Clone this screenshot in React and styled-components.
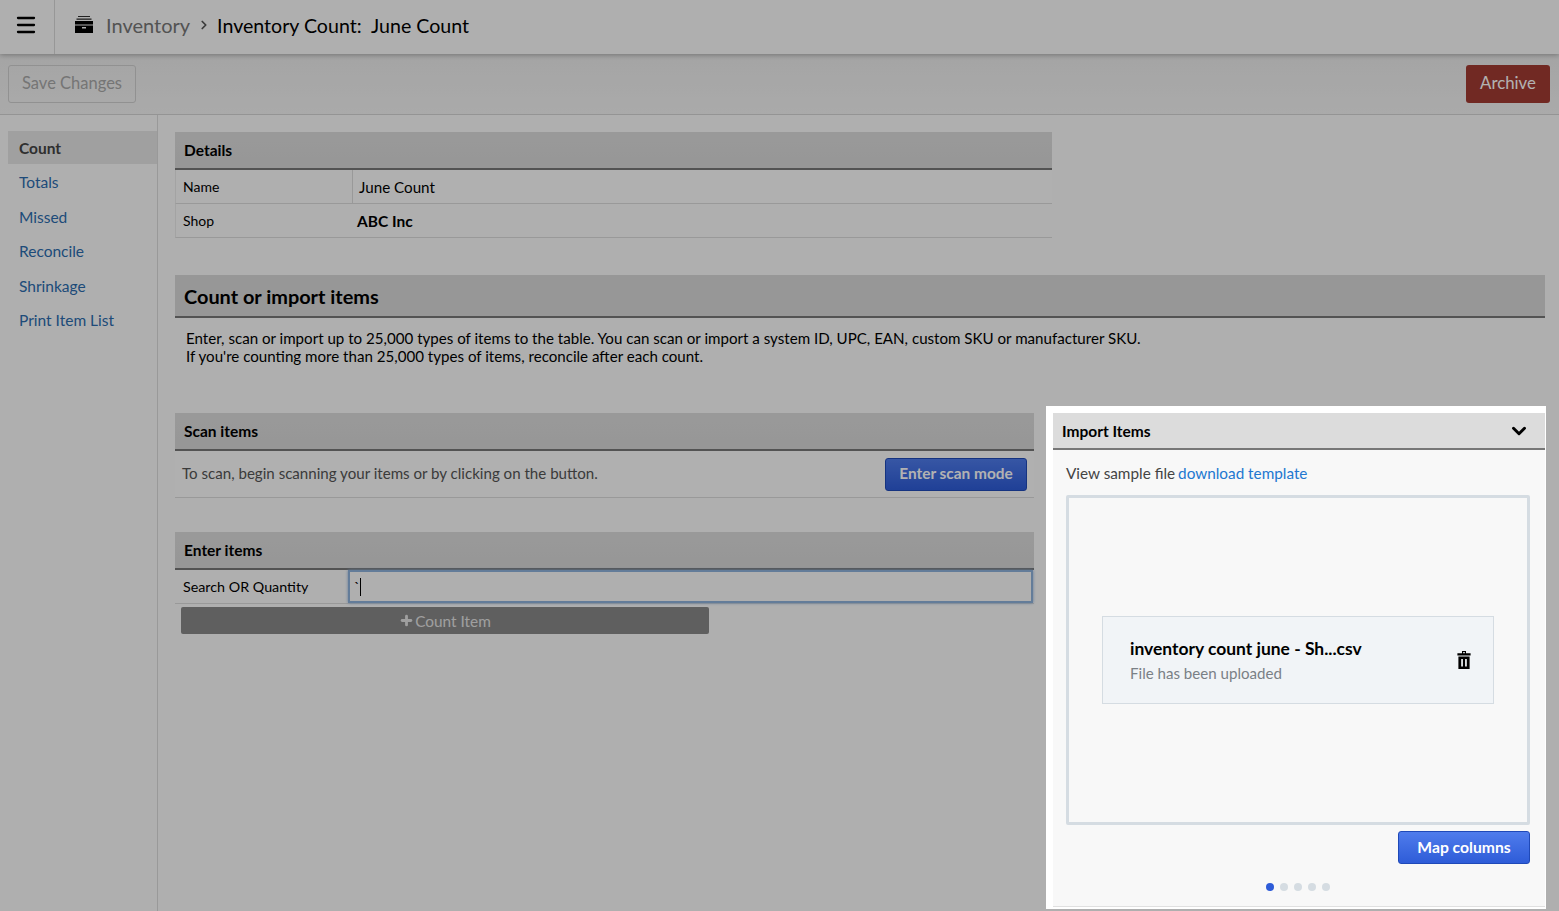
import styled, { createGlobalStyle } from "styled-components";
import { Menu, ChevronRight, ChevronDown, Plus } from "lucide-react";

const GlobalStyle = createGlobalStyle`
  html, body {
    margin: 0;
    height: 100%;
    overflow: hidden;
    background: #fbfbfb;
    font-family: Lato, "Liberation Sans", sans-serif;
    color: #000;
  }
  * { box-sizing: border-box; }
`;

const navItems = ["Count", "Totals", "Missed", "Reconcile", "Shrinkage", "Print Item List"];

const ArchiveBoxIcon = () => (
  <svg width="18" height="18" viewBox="0 0 18 18" fill="#000">
    <rect x="3" y="0" width="12" height="1" fill="#333" />
    <rect x="1.5" y="2.5" width="15" height="1.3" fill="#333" />
    <rect x="0" y="5" width="18" height="3.5" />
    <path d="M0 9.5h18V17H0z M7 11v1.6h4V11z" fillRule="evenodd" />
  </svg>
);

const TrashIcon = () => (
  <svg width="14" height="18" viewBox="0 0 14 18" fill="#000">
    <path d="M5 0h4v2.2h4.6v2.4H.4V2.2H5z M6.2 1v1.2h1.6V1z" fillRule="evenodd" />
    <path d="M1.4 5.6h11.2V18H1.4z M4.2 8v7.4h1.7V8z M8.1 8v7.4h1.7V8z" fillRule="evenodd" />
  </svg>
);

const App = () => {
  return (
    <>
      <GlobalStyle />
      <Page>
        <Header>
          <MenuCell>
            <Menu size={24} strokeWidth={2.3} color="#000" />
          </MenuCell>
          <Crumbs>
            <ArchiveBoxIcon />
            <CrumbLink>Inventory</CrumbLink>
            <ChevronRight size={14} strokeWidth={3} color="#555" />
            <CrumbTitle>Inventory Count:&nbsp; June Count</CrumbTitle>
          </Crumbs>
        </Header>
        <Toolbar>
          <SaveButton>Save Changes</SaveButton>
          <ArchiveButton>Archive</ArchiveButton>
        </Toolbar>
        <Body>
          <Sidebar>
            {navItems.map((item, i) => (
              <NavItem key={item} $active={i === 0}>
                {item}
              </NavItem>
            ))}
          </Sidebar>
          <Main>
            <DetailsCard>
              <SectionHeader>Details</SectionHeader>
              <FieldRow>
                <FieldLabel>Name</FieldLabel>
                <FieldValue $boxed>June Count</FieldValue>
              </FieldRow>
              <FieldRow>
                <FieldLabel>Shop</FieldLabel>
                <FieldValue $bold>ABC Inc</FieldValue>
              </FieldRow>
            </DetailsCard>

            <BigHeader>Count or import items</BigHeader>
            <Intro>
              Enter, scan or import up to 25,000 types of items to the table. You can scan or import a system ID, UPC, EAN, custom SKU or manufacturer SKU.
              <br />
              If you're counting more than 25,000 types of items, reconcile after each count.
            </Intro>

            <Columns>
              <LeftColumn>
                <section>
                  <SectionHeader>Scan items</SectionHeader>
                  <ScanRow>
                    <ScanText>To scan, begin scanning your items or by clicking on the button.</ScanText>
                    <ScanButton>Enter scan mode</ScanButton>
                  </ScanRow>
                </section>
                <section>
                  <SectionHeader>Enter items</SectionHeader>
                  <EntryRow>
                    <EntryLabel>Search OR Quantity</EntryLabel>
                    <EntryInput>
                      <span>`</span>
                      <Caret />
                    </EntryInput>
                  </EntryRow>
                  <CountButton>
                    <Plus size={15} strokeWidth={4.5} />
                    Count Item
                  </CountButton>
                </section>
              </LeftColumn>

              <ImportPanel>
                <ImportHeader>
                  Import Items
                  <ChevronDown size={22} strokeWidth={3.2} />
                </ImportHeader>
                <ImportBody>
                  <SampleLine>
                    View sample file <SampleLink>download template</SampleLink>
                  </SampleLine>
                  <DropZone>
                    <FileCard>
                      <FileText>
                        <FileName>inventory count june - Sh...csv</FileName>
                        <FileStatus>File has been uploaded</FileStatus>
                      </FileText>
                      <TrashIcon />
                    </FileCard>
                  </DropZone>
                  <MapRow>
                    <MapButton>Map columns</MapButton>
                  </MapRow>
                  <Dots>
                    {[0, 1, 2, 3, 4].map((d) => (
                      <Dot key={d} $active={d === 0} />
                    ))}
                  </Dots>
                </ImportBody>
              </ImportPanel>
            </Columns>
          </Main>
        </Body>
        <Overlay />
      </Page>
    </>
  );
};

export default App;

const Page = styled.div`
  position: relative;
  height: 911px;
  overflow: hidden;
  display: flex;
  flex-direction: column;
`;

const Overlay = styled.div`
  position: absolute;
  inset: 0;
  background: rgba(0, 0, 0, 0.3);
  z-index: 5;
`;

const Header = styled.header`
  position: relative;
  z-index: 1;
  height: 54px;
  flex: none;
  display: flex;
  background: #fbfbfb;
  box-shadow: 0 1px 5px rgba(0, 0, 0, 0.3);
`;

const MenuCell = styled.div`
  width: 55px;
  display: flex;
  align-items: center;
  padding: 0 0 5px 14px;
  border-right: 1px solid #d8d8d8;
`;

const Crumbs = styled.div`
  display: flex;
  align-items: center;
  padding: 0 0 4px 20px;
`;

const CrumbLink = styled.span`
  margin-left: 13px;
  margin-right: 7px;
  font-size: 20px;
  color: #777;
`;

const CrumbTitle = styled.span`
  margin-left: 6px;
  font-size: 19.6px;
  color: #000;
`;

const Toolbar = styled.div`
  height: 61px;
  flex: none;
  display: flex;
  align-items: center;
  justify-content: space-between;
  padding: 0 9px 1px 8px;
  background: linear-gradient(#ececec, #f4f4f4);
  border-bottom: 1px solid #d4d4d4;
`;

const SaveButton = styled.button`
  width: 128px;
  height: 38px;
  padding-bottom: 3px;
  font: 16.5px Lato, sans-serif;
  color: #a8a8a8;
  background: transparent;
  border: 1px solid #d0d0d0;
  border-radius: 3px;
`;

const ArchiveButton = styled.button`
  width: 84px;
  height: 38px;
  padding: 0 0 3px;
  font: 16.8px Lato, sans-serif;
  color: #fff;
  background: #a33b33;
  border: none;
  border-radius: 3px;
`;

const Body = styled.div`
  flex: 1;
  display: flex;
  min-height: 0;
`;

const Sidebar = styled.nav`
  width: 158px;
  flex: none;
  padding: 16px 0 0 8px;
  border-right: 1px solid #dcdcdc;
`;

const NavItem = styled.div`
  height: 33px;
  margin-bottom: 1.5px;
  padding-left: 11px;
  display: flex;
  align-items: center;
  font-size: 15.5px;
  font-weight: ${(p) => (p.$active ? 700 : 400)};
  color: ${(p) => (p.$active ? "#444" : "#2b6cae")};
  background: ${(p) => (p.$active ? "#e6e6e6" : "transparent")};
`;

const Main = styled.main`
  flex: 1;
  min-width: 0;
  padding: 17px 14px 0 17px;
`;

const DetailsCard = styled.section`
  width: 877px;
  margin-bottom: 37px;
`;

const SectionHeader = styled.h3`
  margin: 0;
  height: 38px;
  padding: 0 9px;
  display: flex;
  align-items: center;
  font-size: 15.5px;
  font-weight: 700;
  color: #000;
  background: linear-gradient(#dcdcdc, #d8d8d8);
  border-bottom: 2px solid #777;
`;

const FieldRow = styled.div`
  display: flex;
  height: 34px;
  border-bottom: 1px solid #dcdcdc;
  border-left: 1px solid #eaeaea;
`;

const FieldLabel = styled.div`
  width: 176px;
  padding-left: 7px;
  display: flex;
  align-items: center;
  font-size: 14px;
`;

const FieldValue = styled.div`
  flex: 1;
  display: flex;
  align-items: center;
  padding-left: ${(p) => (p.$boxed ? "6px" : "4px")};
  font-size: ${(p) => (p.$bold ? "15.5px" : "15.2px")};
  font-weight: ${(p) => (p.$bold ? 700 : 400)};
  border-left: ${(p) => (p.$boxed ? "1px solid #dcdcdc" : "1px solid transparent")};
  background: ${(p) => (p.$boxed ? "#fdfdfd" : "transparent")};
`;

const BigHeader = styled.h2`
  margin: 0;
  height: 43px;
  padding: 0 9px;
  display: flex;
  align-items: center;
  font-size: 19.9px;
  font-weight: 700;
  background: #d8d8d8;
  border-bottom: 2px solid #777;
`;

const Intro = styled.p`
  margin: 11px 0 0;
  padding-left: 11px;
  font-size: 15.11px;
  line-height: 18px;
  height: 84px;
  color: #000;
`;

const Columns = styled.div`
  display: flex;
  align-items: flex-start;
  gap: 12px;
`;

const LeftColumn = styled.div`
  width: 859px;
  flex: none;
  display: flex;
  flex-direction: column;
  gap: 34px;
`;

const ScanRow = styled.div`
  height: 47px;
  padding: 0 7px;
  display: flex;
  align-items: center;
  justify-content: space-between;
  color: #555;
  background: #fcfcfc;
  border-bottom: 1px solid #dcdcdc;
`;

const ScanText = styled.span`
  padding-bottom: 2px;
  font-size: 15.1px;
`;

const ScanButton = styled.button`
  width: 142px;
  height: 33px;
  padding: 0 0 2px;
  font: 700 15.4px Lato, sans-serif;
  color: #fff;
  background: linear-gradient(#4f7cec, #2e5cd8);
  border: 1px solid #1f49b8;
  border-radius: 3px;
`;

const EntryRow = styled.div`
  display: flex;
  height: 34px;
  border-bottom: 1px solid #dcdcdc;
`;

const EntryLabel = styled.div`
  width: 173px;
  padding-left: 8px;
  display: flex;
  align-items: center;
  font-size: 14.3px;
`;

const EntryInput = styled.div`
  flex: 1;
  display: flex;
  align-items: center;
  margin-right: 1px;
  padding-left: 4px;
  font-size: 15px;
  background: #fbfbfb;
  border: 2px solid #8fb2dc;
  box-shadow: 0 0 3px #8fb2dc;
`;

const Caret = styled.span`
  width: 1px;
  height: 18px;
  background: #000;
`;

const CountButton = styled.button`
  margin: 3px 0 0 6px;
  width: 528px;
  height: 27px;
  display: flex;
  align-items: center;
  justify-content: center;
  gap: 1px;
  font: 15.4px Lato, sans-serif;
  color: #e4e4e4;
  background: #888;
  border: none;
  border-radius: 2px;
`;

const ImportPanel = styled.aside`
  position: relative;
  z-index: 6;
  width: 500px;
  flex: none;
  height: 503px;
  margin-top: -7px;
  padding: 7px 1px 2px 7px;
  background: #fff;
`;

const ImportHeader = styled.div`
  height: 37px;
  padding: 0 15px 0 9px;
  display: flex;
  align-items: center;
  justify-content: space-between;
  font-size: 15.5px;
  font-weight: 700;
  background: #dcdcdc;
  border-bottom: 2px solid #777;
`;

const ImportBody = styled.div`
  height: 457px;
  padding: 0 15px 0 13px;
  background: #f8f8f8;
  border-bottom: 1px solid #e0e0e0;
`;

const SampleLine = styled.div`
  height: 45px;
  display: flex;
  align-items: center;
  gap: 3px;
  font-size: 15.3px;
  color: #444;
`;

const SampleLink = styled.a`
  color: #2277d0;
`;

const DropZone = styled.div`
  height: 330px;
  display: flex;
  align-items: center;
  justify-content: center;
  border: 3px solid #d5dce2;
  border-radius: 2px;
`;

const FileCard = styled.div`
  width: 392px;
  height: 88px;
  padding: 0 22px 0 27px;
  display: flex;
  align-items: center;
  justify-content: space-between;
  background: #f1f4f7;
  border: 1px solid #d5dce2;
`;

const FileText = styled.div`
  margin-top: 2px;
`;

const FileName = styled.div`
  font-size: 17.45px;
  font-weight: 700;
  line-height: 24px;
  color: #000;
`;

const FileStatus = styled.div`
  font-size: 15.1px;
  line-height: 25px;
  color: #7a8086;
`;

const MapRow = styled.div`
  display: flex;
  justify-content: flex-end;
  margin-top: 6px;
`;

const MapButton = styled.button`
  width: 132px;
  height: 33px;
  padding: 0 0 2px;
  font: 700 15.7px Lato, sans-serif;
  color: #fff;
  background: linear-gradient(#4f7cec, #2e5cd8);
  border: 1px solid #1f49b8;
  border-radius: 3px;
`;

const Dots = styled.div`
  display: flex;
  justify-content: center;
  gap: 6px;
  margin-top: 19px;
`;

const Dot = styled.span`
  width: 8px;
  height: 8px;
  border-radius: 50%;
  background: ${(p) => (p.$active ? "#2e5cd8" : "#d5dce2")};
`;
